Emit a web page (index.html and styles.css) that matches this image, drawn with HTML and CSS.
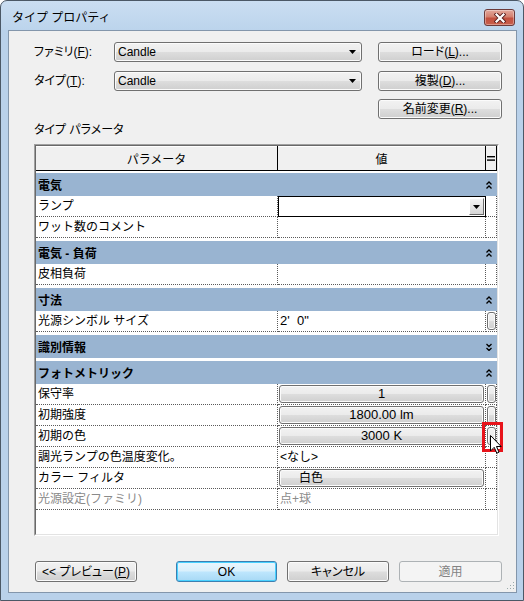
FILE: index.html
```html
<!DOCTYPE html>
<html lang="ja">
<head>
<meta charset="utf-8">
<title>タイプ プロパティ</title>
<link rel="stylesheet" href="styles.css">
</head>
<body>
<div class="window">
  <div class="titlebar">
    <span class="title">タイプ プロパティ</span>
    <div class="close">
      <svg width="12" height="10" viewBox="0 0 12 10">
        <path d="M2.5 1.5 L9.5 8.5 M9.5 1.5 L2.5 8.5" stroke="#5a1e1e" stroke-width="4" stroke-linecap="square"/>
        <path d="M2.5 1.5 L9.5 8.5 M9.5 1.5 L2.5 8.5" stroke="#ffffff" stroke-width="2.2" stroke-linecap="square"/>
      </svg>
    </div>
  </div>
  <div class="client">
    <div class="top">
      <span class="lbl palt">ファミリ(<u>F</u>):</span>
      <div class="combo"><span>Candle</span><svg width="7" height="4" viewBox="0 0 7 4"><path d="M0 0 H7 L3.5 4 Z" fill="#000"/></svg></div>
      <div class="btn palt">ロード(<u>L</u>)...</div>
      <span class="lbl palt">タイプ(<u>T</u>):</span>
      <div class="combo"><span>Candle</span><svg width="7" height="4" viewBox="0 0 7 4"><path d="M0 0 H7 L3.5 4 Z" fill="#000"/></svg></div>
      <div class="btn palt">複製(<u>D</u>)...</div>
      <span></span>
      <span></span>
      <div class="btn palt">名前変更(<u>R</u>)...</div>
    </div>
    <div class="plabel palt">タイプ パラメータ</div>
    <div class="table">
      <div class="table-in">
        <div class="thead">
          <div class="h-name">パラメータ</div>
          <div class="h-val">値</div>
          <div class="h-nar"><svg width="8" height="5" viewBox="0 0 8 5"><rect x="0" y="0" width="8" height="1.4" fill="#000"/><rect x="0" y="3.4" width="8" height="1.4" fill="#000"/></svg></div>
        </div>

        <div class="group first">
          <span class="g-name">電気</span>
          <span class="g-icon"><svg width="6" height="8" viewBox="0 0 6 8"><path d="M0.5 3.5 L3 1 L5.5 3.5 M0.5 7.5 L3 5 L5.5 7.5" fill="none" stroke="#000" stroke-width="1.3"/></svg></span>
        </div>
        <div class="row">
          <div class="c-name">ランプ</div>
          <div class="c-val combo-cell">
            <div class="combo2"><div class="drop"><svg width="7" height="4" viewBox="0 0 7 4"><path d="M0 0 H7 L3.5 4 Z" fill="#000"/></svg></div></div>
          </div>
          <div class="c-nar"></div>
        </div>
        <div class="row">
          <div class="c-name">ワット数のコメント</div>
          <div class="c-val"></div>
          <div class="c-nar"></div>
        </div>

        <div class="group">
          <span class="g-name">電気 - 負荷</span>
          <span class="g-icon"><svg width="6" height="8" viewBox="0 0 6 8"><path d="M0.5 3.5 L3 1 L5.5 3.5 M0.5 7.5 L3 5 L5.5 7.5" fill="none" stroke="#000" stroke-width="1.3"/></svg></span>
        </div>
        <div class="row">
          <div class="c-name">皮相負荷</div>
          <div class="c-val"></div>
          <div class="c-nar"></div>
        </div>

        <div class="group">
          <span class="g-name">寸法</span>
          <span class="g-icon"><svg width="6" height="8" viewBox="0 0 6 8"><path d="M0.5 3.5 L3 1 L5.5 3.5 M0.5 7.5 L3 5 L5.5 7.5" fill="none" stroke="#000" stroke-width="1.3"/></svg></span>
        </div>
        <div class="row">
          <div class="c-name">光源シンボル サイズ</div>
          <div class="c-val"><span class="vtext num">2'  0"</span></div>
          <div class="c-nar"><div class="sbtn"></div></div>
        </div>

        <div class="group">
          <span class="g-name">識別情報</span>
          <span class="g-icon"><svg width="6" height="8" viewBox="0 0 6 8"><path d="M0.5 1 L3 3.5 L5.5 1 M0.5 5 L3 7.5 L5.5 5" fill="none" stroke="#000" stroke-width="1.3"/></svg></span>
        </div>

        <div class="group">
          <span class="g-name">フォトメトリック</span>
          <span class="g-icon"><svg width="6" height="8" viewBox="0 0 6 8"><path d="M0.5 3.5 L3 1 L5.5 3.5 M0.5 7.5 L3 5 L5.5 7.5" fill="none" stroke="#000" stroke-width="1.3"/></svg></span>
        </div>
        <div class="row">
          <div class="c-name">保守率</div>
          <div class="c-val"><div class="vbtn num">1</div></div>
          <div class="c-nar"><div class="sbtn"></div></div>
        </div>
        <div class="row">
          <div class="c-name">初期強度</div>
          <div class="c-val"><div class="vbtn num">1800.00 lm</div></div>
          <div class="c-nar"><div class="sbtn"></div></div>
        </div>
        <div class="row">
          <div class="c-name">初期の色</div>
          <div class="c-val"><div class="vbtn num">3000 K</div></div>
          <div class="c-nar"><div class="sbtn"></div></div>
        </div>
        <div class="row">
          <div class="c-name">調光ランプの色温度変化。</div>
          <div class="c-val"><span class="vtext">&lt;なし&gt;</span></div>
          <div class="c-nar"></div>
        </div>
        <div class="row">
          <div class="c-name">カラー フィルタ</div>
          <div class="c-val"><div class="vbtn left">白色</div></div>
          <div class="c-nar"></div>
        </div>
        <div class="row dim">
          <div class="c-name">光源設定(ファミリ)</div>
          <div class="c-val"><span class="vtext">点+球</span></div>
          <div class="c-nar"></div>
        </div>
      </div>
    </div>
    <div class="footer">
      <div class="btn fb preview palt">&lt;&lt; プレビュー(<u>P</u>)</div>
      <div class="btn fb ok">OK</div>
      <div class="btn fb cancel palt">キャンセル</div>
      <div class="btn fb apply disabled">適用</div>
    </div>
    <div class="highlight"></div>
    <svg class="cursor" width="12" height="19" viewBox="0 0 12 19">
      <path d="M0.5 0.5 L0.5 16 L4.2 12.3 L6.8 18.2 L9 17.2 L6.5 11.5 L11.2 11.5 Z" fill="#fff" stroke="#000" stroke-width="1" stroke-linejoin="miter"/>
    </svg>
    <svg class="grip" width="8" height="8" viewBox="0 0 8 8">
      <rect x="6" y="0" width="1" height="1" fill="#9aa"/>
      <rect x="3" y="3" width="1" height="1" fill="#9aa"/>
      <rect x="6" y="3" width="1" height="1" fill="#9aa"/>
      <rect x="0" y="6" width="1" height="1" fill="#9aa"/>
      <rect x="3" y="6" width="1" height="1" fill="#9aa"/>
      <rect x="6" y="6" width="1" height="1" fill="#9aa"/>
    </svg>
  </div>
</div>
</body>
</html>
```

FILE: styles.css
```css
* { box-sizing: border-box; }

body {
  margin: 0;
  font-family: "Liberation Sans", "Noto Sans CJK JP", sans-serif;
  font-size: 12px;
  color: #000;
  background: #ffffff;
}

u { text-decoration: underline; text-underline-offset: 1px; }

.palt { font-feature-settings: "palt" 1; }

.window {
  width: 524px;
  height: 601px;
  border: 1px solid #4b5866;
  border-radius: 7px 7px 0 0;
  background: linear-gradient(#cadef2 0, #bcd4ec 29px, #b9d1ea 29px, #b9d1ea 100%);
  display: flex;
  flex-direction: column;
  overflow: hidden;
}

.titlebar {
  height: 29px;
  flex: none;
  display: flex;
  justify-content: space-between;
  align-items: flex-start;
  padding-left: 11px;
}

.title {
  margin-top: 9px;
  line-height: 16px;
  font-size: 12px;
  color: #000;
}

.close {
  width: 31px;
  height: 17px;
  margin-top: 8px;
  margin-right: 8px;
  border: 1px solid #6b3a3a;
  border-radius: 3px;
  background: linear-gradient(#e3a89c 0%, #d4806f 45%, #c2503f 55%, #c85f4c 100%);
  box-shadow: inset 0 0 0 1px rgba(255,255,255,0.35);
  display: flex;
  align-items: center;
  justify-content: center;
}

.client {
  flex: 1;
  margin: 0 6px 7px 7px;
  background: #f0f0f0;
  border: 1px solid #8396ab;
  padding: 11px 12px 0 25px;
  display: flex;
  flex-direction: column;
  position: relative;
}

.top {
  display: grid;
  grid-template-columns: 64px 248px 124px;
  column-gap: 16px;
  grid-template-rows: 29px 28px 20px;
  align-items: start;
}

.lbl {
  height: 20px;
  line-height: 20px;
  white-space: nowrap;
}

.btn {
  height: 20px;
  border: 1px solid #707070;
  border-radius: 3px;
  background: linear-gradient(#f2f2f2 0%, #ebebeb 48%, #dddddd 52%, #cfcfcf 100%);
  box-shadow: inset 0 0 0 1px #fbfbfb;
  display: flex;
  align-items: center;
  justify-content: center;
  line-height: 16px;
}

.combo {
  height: 20px;
  border: 1px solid #707070;
  border-radius: 3px;
  background: linear-gradient(#f2f2f2 0%, #ebebeb 48%, #dddddd 52%, #cfcfcf 100%);
  box-shadow: inset 0 0 0 1px #fbfbfb;
  display: flex;
  align-items: center;
  justify-content: space-between;
  padding: 0 5px 0 3px;
}

.plabel {
  margin-top: 1px;
  height: 20px;
  line-height: 20px;
  margin-bottom: 4px;
}

.table {
  width: 465px;
  height: 392px;
  flex: none;
  border: 1px solid;
  border-color: #a0a0a0 #ffffff #ffffff #a0a0a0;
  background: #ffffff;
}

.table-in {
  height: 100%;
  border: 1px solid;
  border-color: #696969 #e3e3e3 #e3e3e3 #696969;
  display: flex;
  flex-direction: column;
}

.thead {
  height: 25px;
  flex: none;
  display: flex;
  background: #f0f0f0;
  border-bottom: 1px solid #000;
  box-shadow: inset 0 1px 0 #ffffff;
}

.h-name, .h-val, .h-nar {
  border-right: 1px solid #000;
  display: flex;
  align-items: center;
  justify-content: center;
}

.h-name { width: 242px; }
.h-val { width: 208px; }
.h-nar { width: 11px; }

.group {
  height: 23px;
  flex: none;
  margin-top: 3px;
  background: #99b4d1;
  display: flex;
  align-items: center;
  font-weight: bold;
}
.group.first { margin-top: 2px; }

.g-name {
  flex: 1;
  padding-left: 2px;
}

.g-icon {
  width: 11px;
  display: flex;
  align-items: center;
}

.row {
  height: 21px;
  flex: none;
  display: flex;
}

.c-name, .c-val, .c-nar {
  border-right: 1px dotted #5a5a5a;
  border-bottom: 1px dotted #5a5a5a;
}

.c-name {
  width: 242px;
  padding-left: 2px;
  line-height: 20px;
  white-space: nowrap;
}

.c-val { width: 208px; }
.c-nar { width: 11px; }

.row.dim { color: #8a8a8a; }

.vtext {
  display: block;
  padding-left: 2px;
  line-height: 20px;
  white-space: pre;
}

.num { font-size: 13px; }

.vbtn {
  margin: 1px 0 0 1px;
  width: 205px;
  height: 18px;
  border: 1px solid #707070;
  border-radius: 3px;
  background: linear-gradient(#f2f2f2 0%, #ebebeb 48%, #dddddd 52%, #cfcfcf 100%);
  box-shadow: inset 0 0 0 1px #fbfbfb;
  display: flex;
  align-items: center;
  justify-content: center;
  line-height: 16px;
}
.vbtn.left { justify-content: flex-start; padding-left: 19px; }

.sbtn {
  margin: 1px 0 0 1px;
  width: 9px;
  height: 18px;
  border: 1px solid #707070;
  border-radius: 3px;
  background: linear-gradient(#f2f2f2 0%, #ebebeb 48%, #dddddd 52%, #cfcfcf 100%);
  box-shadow: inset 0 0 0 1px #fbfbfb;
}

.c-val.combo-cell { border: none; }

.combo2 {
  width: 208px;
  height: 21px;
  border: 1px solid #000;
  background: #ffffff;
  display: flex;
  justify-content: flex-end;
  padding: 1px 1px 1px 0;
}

.drop {
  width: 15px;
  height: 17px;
  background: linear-gradient(#f4f4f4, #d6d6d6);
  border: 1px solid;
  border-color: #ffffff #6a6a6a #6a6a6a #ffffff;
  display: flex;
  align-items: center;
  justify-content: center;
}

.footer {
  margin-top: 25px;
  display: flex;
}

.fb { height: 21px; }
.preview { width: 102px; margin-left: 1px; }
.ok {
  width: 101px;
  margin-left: 39px;
  border-color: #3c7fb1;
  box-shadow: inset 0 0 0 1px #48d1ff;
  background: linear-gradient(#eaf6fd 0%, #d9f0fc 48%, #bee6fd 52%, #a7d9f5 100%);
}
.cancel { width: 102px; margin-left: 10px; }
.apply { width: 103px; margin-left: 10px; }
.disabled {
  border-color: #adb2b5;
  background: #f4f4f4;
  box-shadow: none;
  color: #838383;
}

.highlight {
  position: absolute;
  left: 473px;
  top: 391px;
  width: 21px;
  height: 30px;
  border: 3px solid #e8141b;
}

.cursor {
  position: absolute;
  left: 481px;
  top: 404px;
}

.grip {
  position: absolute;
  left: 498px;
  top: 551px;
}
```
